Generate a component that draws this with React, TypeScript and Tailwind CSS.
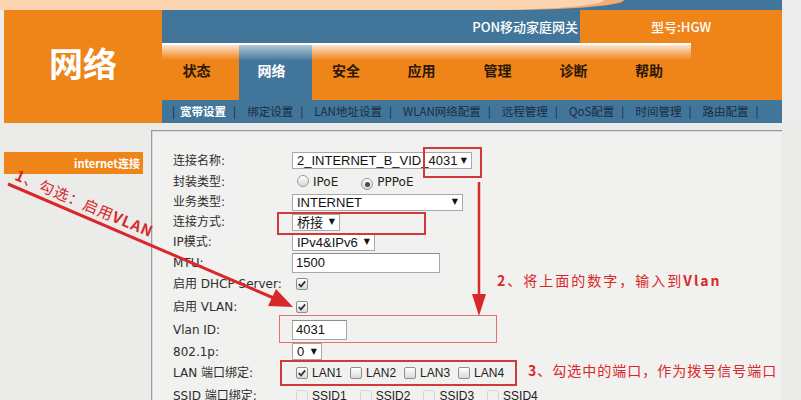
import React from "react";

const subNav = ["宽带设置", "绑定设置", "LAN地址设置", "WLAN网络配置", "远程管理", "QoS配置", "时间管理", "路由配置"];

const tabs = [
  { name: "状态", w: "w-[77px]" },
  { name: "网络", w: "w-[73px]", active: true },
  { name: "安全", w: "w-[76px]" },
  { name: "应用", w: "w-[75px]" },
  { name: "管理", w: "w-[77px]" },
  { name: "诊断", w: "w-[75px]" },
  { name: "帮助", w: "w-[76px]" },
];

function Check({ checked, disabled }: { checked?: boolean; disabled?: boolean }) {
  return (
    <span
      className={`inline-flex h-[12px] w-[12px] shrink-0 items-center justify-center rounded-[2px] border ${
        disabled
          ? "border-[#d6d6d6] bg-[#f0f0f0]"
          : "border-[#8e8e8e] bg-[linear-gradient(to_bottom,#ffffff,#d9d9d9)]"
      }`}
    >
      {checked && (
        <svg width="10" height="10" viewBox="0 0 10 10">
          <path d="M1.8 5.2 L4 7.4 L8.2 2.4" fill="none" stroke="#333" strokeWidth="1.7" />
        </svg>
      )}
    </span>
  );
}

function Radio({ checked }: { checked?: boolean }) {
  return (
    <span className="inline-flex h-[12px] w-[12px] shrink-0 items-center justify-center rounded-full border border-[#9a9a9a] bg-[linear-gradient(to_bottom,#ffffff,#d6d6d6)]">
      {checked && <span className="h-[5px] w-[5px] rounded-full bg-[#4a4a4a]" />}
    </span>
  );
}

function Select({ value, className }: { value: string; className: string }) {
  return (
    <div
      className={`flex h-[17px] items-center justify-between border border-[#a8a8a8] bg-white pl-[4px] pr-[4px] font-['Liberation_Sans','Noto_Sans_CJK_SC',sans-serif] text-[13px] text-[#111] ${className}`}
    >
      <span className="leading-none">{value}</span>
      <span className="font-['DejaVu_Sans',sans-serif] text-[8px] leading-none">▼</span>
    </div>
  );
}

function Row({ label, h, children }: { label: string; h: string; children?: React.ReactNode }) {
  return (
    <div className={`flex items-center ${h}`}>
      <div className="w-[119px] shrink-0 text-[12px] text-[#2e2e2e]">{label}</div>
      <div className="flex items-center">{children}</div>
    </div>
  );
}

export default function App() {
  return (
    <div className="relative h-[400px] w-[801px] overflow-hidden bg-[#ebebea] font-['DejaVu_Sans','Noto_Sans_CJK_SC',sans-serif]">
      {/* header */}
      <div className="flex">
        <div className="w-[782px]">
          <div className="flex h-[10px] bg-[#41769a]">
            <div className="h-full w-[624px] rounded-br-[120px_10px] bg-[#f3ac72]">
              <div className="h-full w-[604px] rounded-br-[120px_10px] bg-[#fbd4b2]" />
            </div>
          </div>
          <div className="flex font-['Noto_Sans_CJK_SC',sans-serif]">
            <div className="w-[4px] bg-[#ececec]" />
            <div className="flex h-[113px] w-[158px] items-center justify-center bg-[#ef8519] pb-[8px] text-[34px] font-bold text-white">
              网络
            </div>
            <div className="flex w-[620px] flex-col">
              <div className="flex h-[33px]">
                <div className="flex w-[418px] items-center justify-end bg-[#41769a] pr-[2px] text-[13px] font-medium text-white">
                  PON移动家庭网关
                </div>
                <div className="flex flex-1 items-center justify-center bg-[#ef8519] text-[13px] font-medium text-white">
                  型号:HGW
                </div>
              </div>
              <div className="flex h-[57px] bg-[#ef8519]">
                <div className="flex border-t-2 border-white">
                  {tabs.map((t) => (
                    <div
                      key={t.name}
                      className={`flex items-center justify-center pb-[4px] pr-[8px] text-[14px] font-bold ${t.w} ${
                        t.active
                          ? "bg-[linear-gradient(to_bottom,#b4c8d6_0px,#41769a_16px)] text-white"
                          : "bg-[linear-gradient(to_bottom,#fde4cf_0px,#ef8519_15px)] text-[#2a1706]"
                      }`}
                    >
                      {t.name}
                    </div>
                  ))}
                </div>
              </div>
              <div className="flex h-[23px] items-center bg-[#41769a] pl-[10px] text-[11.5px] text-[#1b2c40]">
                {subNav.map((s, i) => (
                  <React.Fragment key={s}>
                    <span>|</span>
                    <span
                      className={`${i === 0 ? "ml-[5px] font-bold text-white" : "ml-[11px]"} mr-[7px]`}
                    >
                      {s}
                    </span>
                  </React.Fragment>
                ))}
                <span>|</span>
              </div>
            </div>
          </div>
        </div>
        <div className="flex-1 bg-[#ececec]" />
      </div>

      {/* body */}
      <div className="mt-[7px] flex">
        <div className="w-[151px] pl-[4px]">
          <div className="mt-[22px] flex h-[22px] w-[139px] items-center justify-end bg-[#ef8519] pr-[3px] font-['Noto_Sans_CJK_SC',sans-serif] text-[11px] font-bold text-white">
            internet连接
          </div>
        </div>
        <div className="h-[270px] w-[631px] border-l border-t border-[#9d9d9d] bg-[#f1f1ef] pl-[21px] pt-[19px] shadow-[inset_1px_1px_0_#d9d9d9]">
          <Row label="连接名称:" h="h-[21px]">
            <Select value="2_INTERNET_B_VID_4031" className="w-[180px]" />
          </Row>
          <Row label="封装类型:" h="h-[21px]">
            <span className="ml-[5px]">
              <Radio />
            </span>
            <span className="ml-[4px] text-[12px] text-[#222]">IPoE</span>
            <span className="ml-[23px]">
              <Radio checked />
            </span>
            <span className="ml-[4px] text-[12px] text-[#222]">PPPoE</span>
          </Row>
          <Row label="业务类型:" h="h-[20px]">
            <Select value="INTERNET" className="w-[171px]" />
          </Row>
          <Row label="连接方式:" h="h-[20px]">
            <Select value="桥接" className="w-[48px]" />
          </Row>
          <Row label="IP模式:" h="h-[20px]">
            <Select value="IPv4&IPv6" className="w-[83px]" />
          </Row>
          <Row label="MTU:" h="h-[21px]">
            <div className="flex h-[20px] w-[148px] items-center border border-[#a8a8a8] border-t-[#8c8c8c] bg-white pl-[3px] font-['Liberation_Sans',sans-serif] text-[13px] text-[#111]">
              1500
            </div>
          </Row>
          <Row label="启用 DHCP Server:" h="h-[22px]">
            <span className="ml-[4px]">
              <Check checked />
            </span>
          </Row>
          <Row label="启用 VLAN:" h="h-[23px]">
            <span className="ml-[4px]">
              <Check checked />
            </span>
          </Row>
          <Row label="Vlan ID:" h="h-[23px]">
            <div className="flex h-[20px] w-[55px] items-center border border-[#a8a8a8] border-t-[#8c8c8c] bg-white pl-[3px] font-['Liberation_Sans',sans-serif] text-[13px] text-[#111]">
              4031
            </div>
          </Row>
          <Row label="802.1p:" h="h-[21px]">
            <Select value="0" className="w-[30px]" />
          </Row>
          <Row label="LAN 端口绑定:" h="h-[22px]">
            <div className="ml-[4px] flex items-center font-['Liberation_Sans',sans-serif] text-[12px] text-[#222]">
              {["LAN1", "LAN2", "LAN3", "LAN4"].map((l, i) => (
                <span key={l} className="mr-[8px] flex items-center">
                  <Check checked={i === 0} />
                  <span className="ml-[4px]">{l}</span>
                </span>
              ))}
            </div>
          </Row>
          <Row label="SSID 端口绑定:" h="h-[23px]">
            <div className="ml-[4px] flex items-center font-['Liberation_Sans',sans-serif] text-[12px] text-[#222]">
              {["SSID1", "SSID2", "SSID3", "SSID4"].map((l) => (
                <span key={l} className="mr-[13px] flex items-center">
                  <Check disabled />
                  <span className="ml-[4px]">{l}</span>
                </span>
              ))}
            </div>
          </Row>
        </div>
        <div className="flex-1" />
      </div>

      {/* annotations */}
      <div className="absolute left-[423px] top-[147px] h-[31px] w-[59px] border-2 border-[#d0383a]" />
      <div className="absolute left-[277px] top-[212px] h-[23px] w-[149px] border-2 border-[#d0383a]" />
      <div className="absolute left-[279px] top-[315px] h-[28px] w-[218px] border-[1.5px] border-[#e07272]" />
      <div className="absolute left-[280px] top-[360px] h-[26px] w-[237px] border-2 border-[#d0383a]" />

      <svg className="pointer-events-none absolute left-0 top-0" width="801" height="400" viewBox="0 0 801 400">
        <line x1="8" y1="184" x2="276" y2="299" stroke="#d8282a" strokeWidth="3" />
        <polygon points="293,307 268,306 276,289" fill="#d8282a" />
        <line x1="479" y1="182" x2="479" y2="298" stroke="#d8282a" strokeWidth="2.5" />
        <polygon points="479,316 472,294 486,294" fill="#d8282a" />
      </svg>

      <div className="absolute left-[16px] top-[165px] origin-[0%_50%] rotate-[23deg] whitespace-nowrap font-['Noto_Sans_CJK_SC',sans-serif] text-[15px] leading-[18px] tracking-[1px] text-[#d8282a]">
        <b>1</b>、勾选：启用<b>VLAN</b>
      </div>
      <div className="absolute left-[497px] top-[271px] whitespace-nowrap font-['Noto_Sans_CJK_SC',sans-serif] text-[14px] leading-[18px] tracking-[2px] text-[#d8282a]">
        <b>2</b>、将上面的数字，输入到<b>Vlan</b>
      </div>
      <div className="absolute left-[528px] top-[361px] whitespace-nowrap font-['Noto_Sans_CJK_SC',sans-serif] text-[14px] leading-[18px] tracking-[1px] text-[#d8282a]">
        <b>3</b>、勾选中的端口，作为拨号信号端口
      </div>
    </div>
  );
}
